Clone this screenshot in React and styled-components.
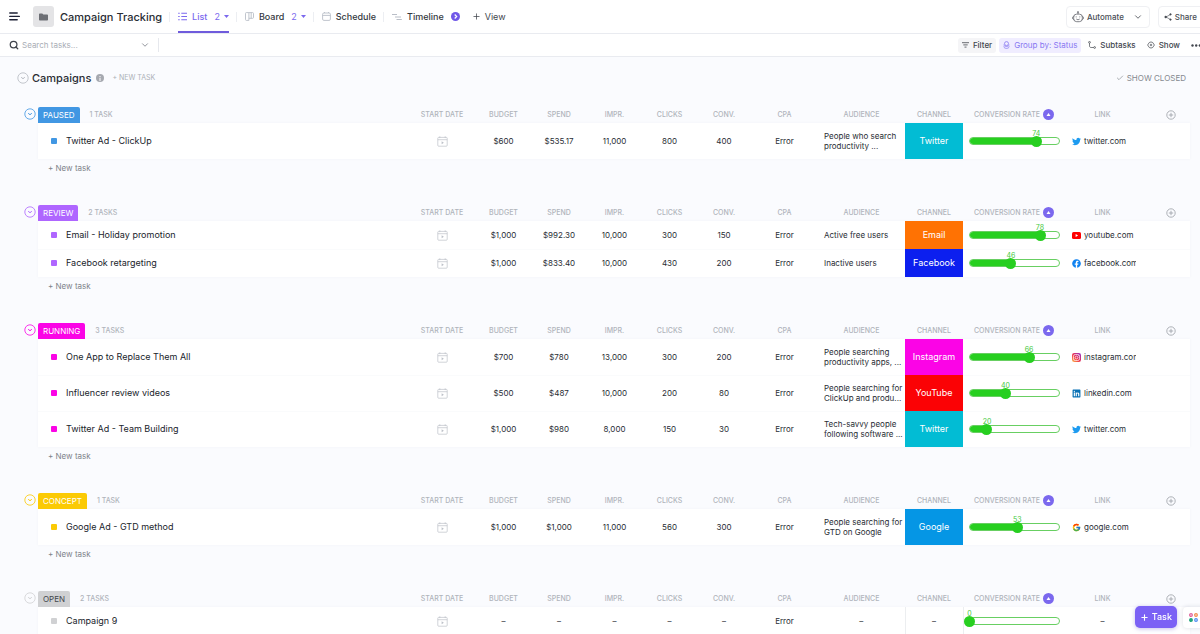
import React, { useState } from "react";
import styled, { createGlobalStyle } from "styled-components";
import { FaTwitter, FaFacebook, FaLinkedin } from "react-icons/fa";
import { FcGoogle } from "react-icons/fc";
import { Check, ChevronDown, Plus, Search } from "lucide-react";

const GlobalStyle = createGlobalStyle`
  *, *::before, *::after { box-sizing: border-box; }
  body {
    margin: 0;
    background: #fafbfe;
    color: #292d34;
    font-family: Inter, "Liberation Sans", sans-serif;
    font-size: 8px;
    line-height: 10px;
  }
  button, input, output { font: inherit; color: inherit; }
  button { margin: 0; padding: 0; border: 0; background: none; cursor: pointer; }
  svg { display: block; flex: none; }
`;

const Page = styled.div`
  display: flex;
  flex-direction: column;
  height: 100vh;
  overflow: hidden;
`;

const TopBar = styled.header`
  display: flex;
  align-items: center;
  flex: none;
  height: 34px;
  padding-left: 9px;
  background: #fff;
  border-bottom: 1px solid #e9ebf0;
`;

const MenuButton = styled.button`
  color: #1d2035;
  margin-right: 13px;
`;

const FolderBox = styled.span`
  display: grid;
  place-items: center;
  width: 21px;
  height: 21px;
  border-radius: 3px;
  background: #e4e4e6;
  color: #6d6f75;
`;

const Title = styled.h1`
  margin: 0 7px 0 6px;
  font-size: 11px;
  line-height: 16px;
  font-weight: 500;
  white-space: nowrap;
`;

const Tabs = styled.nav`
  display: flex;
  align-items: center;
  height: 33px;
`;

const TabSlot = styled.div`
  display: flex;
  align-items: center;
  height: 100%;
  &::before {
    content: "";
    width: 1px;
    height: 10px;
    margin-right: 8px;
    background: #eceef2;
  }
`;

const Tab = styled.button`
  display: flex;
  align-items: center;
  gap: 5px;
  height: 100%;
  margin-right: 7px;
  padding-top: 2px;
  border-bottom: 2px solid ${(p) => (p.$active ? "#6f5bdc" : "transparent")};
  color: ${(p) => (p.$active ? "#7b68ee" : "#343840")};
  font-size: 9px;
  font-weight: 500;
  > svg { color: ${(p) => (p.$active ? "#7b68ee" : "#b9bec7")}; }
`;

const TabCount = styled.span`
  display: flex;
  align-items: center;
  gap: 4px;
  margin-left: 2px;
  color: #7b68ee;
  font-weight: 400;
`;

const AddView = styled.button`
  display: flex;
  align-items: center;
  gap: 4px;
  margin-left: 5px;
  color: #42464e;
  font-size: 9px;
`;

const TopActions = styled.div`
  display: flex;
  gap: 8px;
  margin-left: auto;
  margin-right: -8px;
`;

const OutlineButton = styled.button`
  display: flex;
  align-items: center;
  gap: 3px;
  height: 22px;
  padding: 0 ${(p) => (p.$wide ? 6 : 10)}px 0 5px;
  border: 1px solid #eff0f3;
  border-radius: 4px;
  font-weight: 500;
  color: #4a4e56;
  > svg:last-child:not(:first-child) { margin-left: 6px; }
`;

const FilterBar = styled.div`
  display: flex;
  align-items: center;
  flex: none;
  height: 23px;
  padding-left: 9px;
  background: #fff;
  border-bottom: 1px solid #e9ebf0;
`;

const SearchField = styled.label`
  display: flex;
  align-items: center;
  gap: 3px;
  width: 150px;
  padding-right: 8px;
  border-right: 1px solid #e6e8ed;
  input {
    flex: 1;
    min-width: 0;
    height: 14px;
    padding: 0;
    border: 0;
    outline: 0;
    background: transparent;
    font-size: 8px;
  }
  input::placeholder { color: #a9adb5; }
`;

const FilterActions = styled.div`
  display: flex;
  align-items: center;
  margin-left: auto;
  margin-right: -6px;
  gap: 3px;
`;

const ChipButton = styled.button`
  display: flex;
  align-items: center;
  gap: 4px;
  height: 15px;
  padding: 0 4px;
  border-radius: 3px;
  background: ${(p) => (p.$tone === "violet" ? "#f0edff" : p.$tone === "gray" ? "#f5f5f7" : "transparent")};
  color: ${(p) => (p.$tone === "violet" ? "#8878f2" : "#42464e")};
  font-weight: ${(p) => (p.$tone === "violet" ? 400 : 500)};
`;

const Content = styled.main`
  flex: 1;
  min-height: 0;
  padding: 0 10px 0 24px;
  overflow: auto;
  scrollbar-width: none;
`;

const ListHeader = styled.div`
  display: flex;
  align-items: center;
  height: 42px;
  margin: 0 4px 7px -7px;
`;

const ListTitle = styled.h2`
  margin: 0 5px 0 3px;
  font-size: 11px;
  line-height: 14px;
  font-weight: 500;
`;

const InfoDot = styled.button`
  display: grid;
  place-items: center;
  width: 8px;
  height: 8px;
  border-radius: 50%;
  background: #a6a9b0;
  color: #fff;
  margin-right: 8px;
`;

const QuietButton = styled.button`
  display: flex;
  align-items: center;
  gap: 3px;
  color: #adb1b8;
  font-size: 7px;
`;

const ShowClosed = styled(QuietButton)`
  margin-left: auto;
  color: #85898f;
  font-size: 8px;
`;

const Group = styled.section`
  display: flex;
  align-items: flex-start;
  gap: 2px;
`;

const Toggle = styled.button`
  flex: none;
  width: 12px;
  height: 16px;
  display: grid;
  place-items: center;
  color: ${(p) => p.$color};
`;

const GroupBody = styled.div`
  flex: 1;
  min-width: 0;
`;

const TaskTable = styled.table`
  width: 100%;
  table-layout: fixed;
  border-collapse: collapse;
`;

const HeadCell = styled.th`
  width: ${(p) => p.$width}px;
  height: 17px;
  padding: 0;
  font-size: 7px;
  line-height: 8px;
  font-weight: 500;
  color: #b0b4bb;
  text-align: center;
  white-space: nowrap;
`;

const HeadInner = styled.span`
  display: flex;
  align-items: center;
  justify-content: ${(p) => p.$align || "center"};
  gap: ${(p) => p.$gap || 3}px;
  padding-right: ${(p) => p.$end || 0}px;
`;

const StatusBadge = styled.span`
  display: flex;
  align-items: center;
  height: 16px;
  padding: 0 5px;
  border-radius: 2px 2px 0 0;
  background: ${(p) => p.$color};
  color: ${(p) => (p.$dark ? "#42454b" : "#fff")};
  font-size: 8px;
  font-weight: 400;
`;

const SortDot = styled.button`
  display: grid;
  place-items: center;
  width: 11px;
  height: 11px;
  border-radius: 50%;
  background: #7b68ee;
  color: #fff;
`;

const PlusButton = styled.button`
  color: #9a9ea6;
`;

const TableBody = styled.tbody`
  background: #fff;
  box-shadow: 0 0 3px rgba(40, 60, 90, 0.04);
`;

const Row = styled.tr`
  height: ${(p) => (p.$tall ? 36 : 28)}px;
  & + & { box-shadow: inset 0 1px 0 #fafbfc; }
`;

const Cell = styled.td`
  padding: 0;
  text-align: center;
  white-space: nowrap;
`;

const NameCell = styled(Cell).attrs({ as: "th", scope: "row" })`
  font-weight: 400;
`;

const TaskName = styled.a`
  display: flex;
  align-items: center;
  gap: 9px;
  padding-left: 13px;
  color: #20242b;
  font-size: 9px;
  line-height: 12px;
  text-decoration: none;
  &::before {
    content: "";
    width: 6px;
    height: 6px;
    border-radius: 1px;
    background: ${(p) => p.$color};
  }
`;

const DateButton = styled.button`
  display: block;
  margin: 0 auto;
  color: #bdc1c8;
`;

const AudienceCell = styled(Cell)`
  padding: 0 0 0 ${(p) => (p.$empty ? 0 : 6)}px;
  text-align: ${(p) => (p.$empty ? "center" : "left")};
  white-space: pre-line;
`;

const ChannelCell = styled(Cell)`
  background: ${(p) => p.$color || "transparent"};
  color: ${(p) => (p.$color ? "#fff" : "inherit")};
  font-size: ${(p) => (p.$color ? 9 : 8)}px;
  border: ${(p) => (p.$color ? "0" : "solid #eceef0")};
  border-width: ${(p) => (p.$color ? 0 : "0 1px")};
`;

const LinkText = styled.a`
  display: flex;
  align-items: center;
  gap: 3px;
  margin: 0 4px 0 7px;
  overflow: hidden;
  color: #292d34;
  text-decoration: none;
`;

const SliderBox = styled.div`
  position: relative;
  display: grid;
  align-items: center;
  margin: 0 5px 0 6px;
  > * { grid-area: 1 / 1; }
`;

const SliderTrack = styled.div`
  height: 8px;
  border: 1px solid #68cf62;
  border-radius: 4px;
  overflow: hidden;
  background: #fff;
`;

const SliderFill = styled.div`
  height: 100%;
  background: #27cf20;
`;

const SliderInput = styled.input`
  appearance: none;
  height: 12px;
  width: auto;
  min-width: 0;
  margin: 0 -6px;
  background: transparent;
  &::-webkit-slider-thumb {
    appearance: none;
    width: 11px;
    height: 11px;
    border-radius: 50%;
    background: #27cf20;
  }
`;

const SliderValue = styled.output`
  position: absolute;
  bottom: 9px;
  transform: translateX(-50%);
  color: #43c93d;
  font-size: 7px;
  line-height: 8px;
`;

const NewTask = styled.button`
  display: block;
  height: 18px;
  margin: 0 0 27px 10px;
  color: #7f838a;
`;

const FloatingActions = styled.div`
  position: fixed;
  right: -6px;
  bottom: 6px;
  display: flex;
  align-items: center;
  gap: 6px;
`;

const CreateTask = styled.button`
  display: flex;
  align-items: center;
  gap: 3px;
  height: 22px;
  padding: 0 5px;
  border-radius: 5px;
  background: #7b61f5;
  color: #fff;
  font-size: 9px;
  font-weight: 500;
  box-shadow: 0 1px 4px rgba(90, 70, 200, 0.35);
`;

const AppsButton = styled.button`
  display: grid;
  place-items: center;
  width: 23px;
  height: 21px;
  padding-right: 3px;
  border-radius: 4px;
  background: #fff;
  box-shadow: 0 0 4px rgba(40, 50, 80, 0.16);
`;

function HamburgerIcon() {
  return (
    <svg width="11" height="9" viewBox="0 0 11 9" stroke="currentColor" strokeWidth="1.4" strokeLinecap="round">
      <path d="M.8 1H8.2M.8 4.4H10.3M.8 7.8H8.2" />
    </svg>
  );
}

function FolderIcon() {
  return (
    <svg width="9" height="8" viewBox="0 0 9 8" fill="currentColor">
      <path d="M0 1.2Q0 .4.8.4H3.300L4.300 1.500H8.200Q9 1.500 9 2.300V6.800Q9 7.600 8.200 7.600H.8Q0 7.600 0 6.800z" />
    </svg>
  );
}

function ListIcon() {
  return (
    <svg width="9" height="9" viewBox="0 0 9 9" fill="none" stroke="currentColor" strokeWidth="1.1">
      <path d="M3.300 1.300H9M3.300 4.500H9M3.300 7.700H9M.2 1.300h1.500M.2 4.500h1.500M.2 7.700h1.500" />
    </svg>
  );
}

function BoardIcon() {
  return (
    <svg width="9" height="9" viewBox="0 0 9 9" fill="none" stroke="currentColor" strokeWidth=".9">
      <path d="M3.900.6H1.300a.8.8 0 0 0-.8.8v6.200c0 .4.300.8.800.8h2.600zM3.900.6h3.800c.400 0 .800.300.800.8v4.100c0 .4-.300.8-.8.8H3.900M6.200.6v5.700" />
    </svg>
  );
}

function ScheduleIcon() {
  return (
    <svg width="9" height="9" viewBox="0 0 9 9" fill="none" stroke="currentColor" strokeWidth=".9">
      <rect x=".6" y="1" width="7.800" height="7.400" rx="1.300" />
      <path d="M.6 3.400h7.800M2.500 0v1M6.500 0v1" />
    </svg>
  );
}

function TimelineIcon() {
  return (
    <svg width="10" height="8" viewBox="0 0 10 8" stroke="currentColor" strokeWidth="1">
      <path d="M0 1.500h5M3 4h6M4.500 6.500H9.800" />
    </svg>
  );
}

function Caret({ up }) {
  return (
    <svg width="5" height="3" viewBox="0 0 5 3" fill="currentColor">
      <path d={up ? "M2.500 0 4.500 3h-4z" : "M0 0h5L2.500 3z"} />
    </svg>
  );
}

function NextIcon() {
  return (
    <svg width="9" height="9" viewBox="0 0 9 9" fill="none">
      <circle cx="4.500" cy="4.500" r="4.500" fill="#7058e8" />
      <path d="m3.700 2.500 2 2-2 2" stroke="#fff" strokeWidth="1.200" />
    </svg>
  );
}

function RobotIcon() {
  return (
    <svg width="12" height="12" viewBox="0 0 12 12" fill="none" stroke="currentColor" strokeWidth=".7">
      <circle cx="6" cy="1.100" r=".6" />
      <path d="M6 1.700v1.400M1.700 5.200C.2 5.500.2 8.300 1.700 8.600M10.300 5.200c1.500.3 1.500 3.100 0 3.400M4.300 8c.8.9 2.600.9 3.400 0" />
      <rect x="1.700" y="3.100" width="8.600" height="7.600" rx="3" />
      <path d="M4.200 5.400v1M7.800 5.400v1" />
    </svg>
  );
}

function ShareIcon() {
  return (
    <svg width="8" height="8" viewBox="0 0 8 8" fill="currentColor" stroke="currentColor">
      <path d="M6.500 1.500 2 4l4.500 2.500" fill="none" strokeWidth=".6" />
      <circle cx="1.700" cy="4" r="1.200" stroke="none" />
      <circle cx="6.500" cy="1.400" r=".8" strokeWidth=".5" />
      <circle cx="6.500" cy="6.600" r=".8" strokeWidth=".5" />
    </svg>
  );
}

function FilterIcon() {
  return (
    <svg width="7" height="6" viewBox="0 0 7 6" stroke="currentColor" strokeWidth=".8">
      <path d="M0 .7h7M1.300 2.900h4.400M2.500 5.100h2" />
    </svg>
  );
}

function GroupIcon() {
  return (
    <svg width="7" height="8" viewBox="0 0 7 8" fill="none" stroke="currentColor" strokeWidth=".8">
      <circle cx="3.500" cy="2.600" r="2" />
      <path d="M.7 3.700C1 6 6 6 6.300 3.700M.7 5.500C1.200 8 5.800 8 6.300 5.500" />
    </svg>
  );
}

function SubtaskIcon() {
  return (
    <svg width="8" height="8" viewBox="0 0 8 8" fill="none" stroke="currentColor" strokeWidth=".7">
      <circle cx="1.500" cy="1.300" r=".9" />
      <circle cx="6.600" cy="6.500" r=".9" />
      <path d="M1.500 2.200v2.700c0 1 .6 1.600 1.600 1.600h2.600" />
    </svg>
  );
}

function ShowIcon() {
  return (
    <svg width="8" height="8" viewBox="0 0 8 8" fill="none" stroke="currentColor" strokeWidth=".7">
      <path d="M.6 4 2.300 1.500Q4 .4 5.700 1.500L7.400 4 5.700 6.500Q4 7.600 2.300 6.500z" />
      <circle cx="4" cy="4" r=".8" />
    </svg>
  );
}

function DotsIcon() {
  return (
    <svg width="11" height="3" viewBox="0 0 11 3" fill="currentColor">
      <circle cx="1.500" cy="1.500" r="1.200" />
      <circle cx="5.200" cy="1.500" r="1.200" />
      <circle cx="8.900" cy="1.500" r="1.200" />
    </svg>
  );
}

function InfoIcon() {
  return (
    <svg width="2" height="5" viewBox="0 0 2 5" fill="currentColor">
      <path d="M.5 0h1v1h-1zM.5 1.700h1V5h-1z" />
    </svg>
  );
}

function CircleChevron() {
  return (
    <svg width="12" height="12" viewBox="0 0 12 12" fill="none" stroke="currentColor">
      <circle cx="6" cy="6" r="5.200" strokeWidth=".8" />
      <path d="m4.200 5.300 1.800 1.400 1.800-1.400" strokeWidth="1" />
    </svg>
  );
}

function CirclePlus() {
  return (
    <svg width="10" height="10" viewBox="0 0 10 10" fill="none" stroke="currentColor" strokeWidth=".8">
      <circle cx="5" cy="5" r="4.200" />
      <path d="M5 2.800v4.400M2.800 5h4.400" />
    </svg>
  );
}

function DateIcon() {
  return (
    <svg width="11" height="11" viewBox="0 0 11 11" fill="none" stroke="currentColor" strokeWidth=".7">
      <rect x=".8" y="1.400" width="9.400" height="8.800" rx=".8" />
      <path d="M.8 3.700h9.400M2.800.3v1.800M8.200.3v1.800" />
      <path d="M4.600 5.300v3l2.300-1.500z" fill="currentColor" stroke="none" />
    </svg>
  );
}

function YoutubeIcon() {
  return (
    <svg width="9" height="9" viewBox="0 0 9 9">
      <rect y="1" width="9" height="7" rx="1.500" fill="#f00" />
      <path d="M3.600 3v3l2.500-1.500z" fill="#fff" />
    </svg>
  );
}

function InstagramIcon() {
  return (
    <svg width="9" height="9" viewBox="0 0 9 9" fill="none">
      <defs>
        <linearGradient id="ig" x1="0" y1="1" x2="1" y2="0">
          <stop offset="0" stopColor="#fdc04a" />
          <stop offset=".45" stopColor="#f0314a" />
          <stop offset="1" stopColor="#8a2fd0" />
        </linearGradient>
      </defs>
      <rect width="9" height="9" rx="2.300" fill="url(#ig)" />
      <rect x="1.500" y="1.500" width="6" height="6" rx="1.700" stroke="#fff" strokeWidth=".7" />
      <circle cx="4.500" cy="4.500" r="1.400" stroke="#fff" strokeWidth=".7" />
      <circle cx="6.300" cy="2.700" r=".4" fill="#fff" />
    </svg>
  );
}

function AppsIcon() {
  return (
    <svg width="9" height="9" viewBox="0 0 9 9" fill="none" strokeWidth="1.300">
      <circle cx="2" cy="2" r="1.300" stroke="#e0609a" />
      <circle cx="7" cy="2" r="1.300" stroke="#f08a4b" />
      <circle cx="2" cy="7" r="1.300" fill="#21a67a" stroke="#21a67a" />
      <circle cx="7" cy="7" r="1.300" stroke="#4f8df0" />
    </svg>
  );
}

const SITE_ICONS = {
  "twitter.com": <FaTwitter size={9} color="#1d9bf0" />,
  "youtube.com": <YoutubeIcon />,
  "facebook.com": <FaFacebook size={9} color="#0f82f0" />,
  "instagram.com": <InstagramIcon />,
  "linkedin.com": <FaLinkedin size={9} color="#0a72b5" />,
  "google.com": <FcGoogle size={9} />,
};

const CHANNEL_COLORS = {
  Twitter: "#02bcd4",
  Email: "#ff7203",
  Facebook: "#0c1fef",
  Instagram: "#fb04e6",
  YouTube: "#fb0205",
  Google: "#0596e5",
};

const NUMBER_COLUMNS = [
  ["START DATE", 68],
  ["BUDGET", 55],
  ["SPEND", 56],
  ["IMPR.", 55],
  ["CLICKS", 55],
  ["CONV.", 54],
  ["CPA", 67],
  ["AUDIENCE", 87],
  ["CHANNEL", 58],
];

const task = (name, values, audience, channel, rate, link) => ({ name, values, audience, channel, rate, link });

const GROUPS = [
  {
    status: "PAUSED",
    color: "#4197e3",
    count: "1 TASK",
    tall: true,
    tasks: [
      task("Twitter Ad - ClickUp", ["$600", "$535.17", "11,000", "800", "400", "Error"], "People who search\nproductivity ...", "Twitter", 74, "twitter.com"),
    ],
  },
  {
    status: "REVIEW",
    color: "#af66ff",
    count: "2 TASKS",
    tasks: [
      task("Email - Holiday promotion", ["$1,000", "$992.30", "10,000", "300", "150", "Error"], "Active free users", "Email", 78, "youtube.com"),
      task("Facebook retargeting", ["$1,000", "$833.40", "10,000", "430", "200", "Error"], "Inactive users", "Facebook", 46, "facebook.com"),
    ],
  },
  {
    status: "RUNNING",
    color: "#fb04e6",
    count: "3 TASKS",
    tall: true,
    tasks: [
      task("One App to Replace Them All", ["$700", "$780", "13,000", "300", "200", "Error"], "People searching\nproductivity apps, ...", "Instagram", 66, "instagram.com"),
      task("Influencer review videos", ["$500", "$487", "10,000", "200", "80", "Error"], "People searching for\nClickUp and produ...", "YouTube", 40, "linkedin.com"),
      task("Twitter Ad - Team Building", ["$1,000", "$980", "8,000", "150", "30", "Error"], "Tech-savvy people\nfollowing software ...", "Twitter", 20, "twitter.com"),
    ],
  },
  {
    status: "CONCEPT",
    color: "#fbca04",
    count: "1 TASK",
    tall: true,
    tasks: [
      task("Google Ad - GTD method", ["$1,000", "$1,000", "11,000", "560", "300", "Error"], "People searching for\nGTD on Google", "Google", 53, "google.com"),
    ],
  },
  {
    status: "OPEN",
    color: "#d0d1d3",
    dark: true,
    partial: true,
    count: "2 TASKS",
    tasks: [task("Campaign 9", ["–", "–", "–", "–", "–", "Error"], null, null, 0, null)],
  },
];

function RateSlider({ name, initial }) {
  const [value, setValue] = useState(initial);
  return (
    <SliderBox>
      <SliderTrack>
        <SliderFill style={{ width: `${value}%` }} />
      </SliderTrack>
      <SliderInput
        type="range"
        min="0"
        max="100"
        aria-label={`Conversion rate for ${name}`}
        value={value}
        onChange={(e) => setValue(Number(e.target.value))}
      />
      <SliderValue style={{ left: `${value}%` }}>{value}</SliderValue>
    </SliderBox>
  );
}

function TaskRow({ item, group }) {
  return (
    <Row $tall={group.tall}>
      <NameCell>
        <TaskName href="#task" $color={group.color}>{item.name}</TaskName>
      </NameCell>
      <Cell>
        <DateButton aria-label="Set start date"><DateIcon /></DateButton>
      </Cell>
      {item.values.map((value, i) => (
        <Cell key={i}>{value}</Cell>
      ))}
      <AudienceCell $empty={!item.audience}>{item.audience || "–"}</AudienceCell>
      <ChannelCell $color={CHANNEL_COLORS[item.channel]}>{item.channel || "–"}</ChannelCell>
      <Cell>
        <RateSlider name={item.name} initial={item.rate} />
      </Cell>
      <Cell>
        {item.link ? (
          <LinkText href={`#${item.link}`}>
            {SITE_ICONS[item.link]}
            {item.link}
          </LinkText>
        ) : (
          "–"
        )}
      </Cell>
      <Cell />
    </Row>
  );
}

function TaskGroup({ group }) {
  return (
    <Group>
      <Toggle $color={group.color} aria-label={`Collapse ${group.status}`}>
        <CircleChevron />
      </Toggle>
      <GroupBody>
        <TaskTable>
          <thead>
            <tr>
              <HeadCell>
                <HeadInner $align="flex-start" $gap={10}>
                  <StatusBadge $color={group.color} $dark={group.dark}>{group.status}</StatusBadge>
                  {group.count}
                </HeadInner>
              </HeadCell>
              {NUMBER_COLUMNS.map(([label, width]) => (
                <HeadCell key={label} $width={width}>{label}</HeadCell>
              ))}
              <HeadCell $width={102}>
                <HeadInner>
                  CONVERSION RATE
                  <SortDot aria-label="Sort by conversion rate"><Caret up /></SortDot>
                </HeadInner>
              </HeadCell>
              <HeadCell $width={75}>LINK</HeadCell>
              <HeadCell $width={50}>
                <HeadInner $align="flex-end" $end={14}>
                  <PlusButton aria-label="Add column"><CirclePlus /></PlusButton>
                </HeadInner>
              </HeadCell>
            </tr>
          </thead>
          <TableBody>
            {group.tasks.map((item) => (
              <TaskRow key={item.name} item={item} group={group} />
            ))}
          </TableBody>
        </TaskTable>
        {!group.partial && <NewTask>+ New task</NewTask>}
      </GroupBody>
    </Group>
  );
}

export default function App() {
  return (
    <Page>
      <GlobalStyle />
      <TopBar>
        <MenuButton aria-label="Menu"><HamburgerIcon /></MenuButton>
        <FolderBox><FolderIcon /></FolderBox>
        <Title>Campaign Tracking</Title>
        <Tabs>
          <TabSlot>
            <Tab $active><ListIcon />List<TabCount>2<Caret /></TabCount></Tab>
          </TabSlot>
          <TabSlot>
            <Tab><BoardIcon />Board<TabCount>2<Caret /></TabCount></Tab>
          </TabSlot>
          <TabSlot>
            <Tab><ScheduleIcon />Schedule</Tab>
          </TabSlot>
          <TabSlot>
            <Tab><TimelineIcon />Timeline<TabCount><NextIcon /></TabCount></Tab>
          </TabSlot>
          <AddView><Plus size={9} strokeWidth={2} />View</AddView>
        </Tabs>
        <TopActions>
          <OutlineButton $wide><RobotIcon />Automate<ChevronDown size={10} strokeWidth={2} /></OutlineButton>
          <OutlineButton><ShareIcon />Share</OutlineButton>
        </TopActions>
      </TopBar>
      <FilterBar>
        <SearchField>
          <Search size={10} strokeWidth={3} color="#40444c" />
          <input type="text" placeholder="Search tasks..." aria-label="Search tasks" />
          <ChevronDown size={10} color="#7d8189" />
        </SearchField>
        <FilterActions>
          <ChipButton $tone="gray"><FilterIcon />Filter</ChipButton>
          <ChipButton $tone="violet"><GroupIcon />Group by: Status</ChipButton>
          <ChipButton><SubtaskIcon />Subtasks</ChipButton>
          <ChipButton><ShowIcon />Show</ChipButton>
          <ChipButton aria-label="More"><DotsIcon /></ChipButton>
        </FilterActions>
      </FilterBar>
      <Content>
        <ListHeader>
          <Toggle $color="#b5b9c0" aria-label="Collapse Campaigns"><CircleChevron /></Toggle>
          <ListTitle>Campaigns</ListTitle>
          <InfoDot aria-label="List info"><InfoIcon /></InfoDot>
          <QuietButton>+ NEW TASK</QuietButton>
          <ShowClosed><Check size={8} />SHOW CLOSED</ShowClosed>
        </ListHeader>
        {GROUPS.map((group) => (
          <TaskGroup key={group.status} group={group} />
        ))}
      </Content>
      <FloatingActions>
        <CreateTask><Plus size={9} strokeWidth={3} />Task</CreateTask>
        <AppsButton aria-label="Apps"><AppsIcon /></AppsButton>
      </FloatingActions>
    </Page>
  );
}
